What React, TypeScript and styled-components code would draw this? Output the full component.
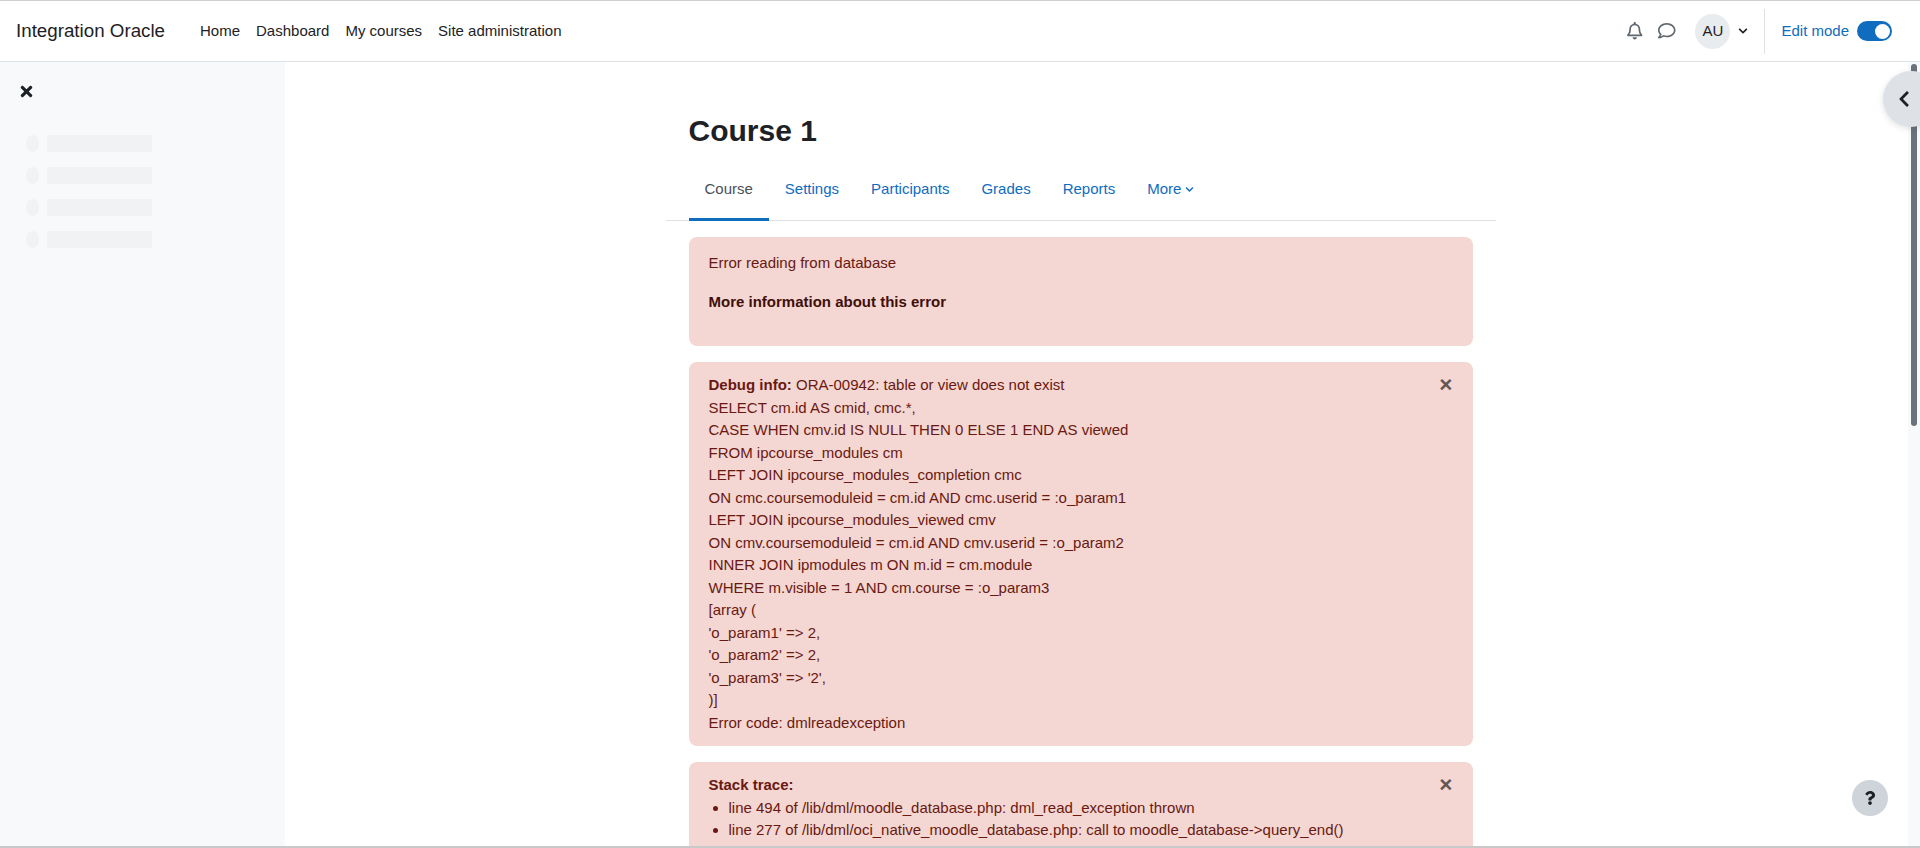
import React from "react";
import styled, { createGlobalStyle } from "styled-components";
import {
  FaRegBell,
  FaRegComment,
  FaChevronDown,
  FaChevronLeft,
  FaTimes,
  FaQuestion,
} from "react-icons/fa";

const GlobalStyle = createGlobalStyle`
  html, body {
    margin: 0;
    padding: 0;
    height: 100%;
    overflow: hidden;
    background: #fff;
    font-family: "Liberation Sans", Arial, sans-serif;
    font-size: 15px;
    line-height: 22.5px;
    color: #1d2125;
  }
  * {
    box-sizing: border-box;
  }
`;

const Shell = styled.div`
  position: relative;
  display: flex;
  flex-direction: column;
  height: 848px;
  border-top: 1px solid #cfcfcf;
  border-bottom: 2px solid #c9c9c9;
  overflow: hidden;
`;

const Navbar = styled.header`
  display: flex;
  align-items: center;
  flex: 0 0 61px;
  height: 61px;
  padding: 0 28px 0 16px;
  background: #fff;
  border-bottom: 1px solid #dee2e6;
`;

const Brand = styled.div`
  width: 176px;
  font-size: 18.75px;
  color: #1d2125;
`;

const PrimaryNav = styled.nav`
  display: flex;
  flex: 1;
`;

const NavLink = styled.a`
  padding: 0 8px;
  color: #1d2125;
`;

const NavTools = styled.div`
  display: flex;
  align-items: center;
  height: 45px;
`;

const ToolIcon = styled.span`
  display: flex;
  width: 32px;
  justify-content: center;
  color: #5f676e;
  font-size: 17.5px;
`;

const Avatar = styled.div`
  display: flex;
  align-items: center;
  justify-content: center;
  width: 35px;
  height: 35px;
  margin-left: 12.5px;
  border-radius: 50%;
  background: #e9ecef;
  font-size: 15px;
  color: #1d2125;
`;

const Caret = styled.span`
  display: flex;
  margin: 0 16px 0 8px;
  font-size: 10px;
  color: #1d2125;
`;

const EditMode = styled.div`
  display: flex;
  align-items: center;
  gap: 8px;
  height: 45px;
  padding-left: 16px;
  border-left: 1px solid #dee2e6;
  color: #0f6cbf;
`;

const Toggle = styled.span`
  display: flex;
  justify-content: flex-end;
  align-items: center;
  width: 35px;
  height: 20px;
  padding: 2px;
  border-radius: 10px;
  background: #0f6cbf;

  &::after {
    content: "";
    width: 15px;
    height: 15px;
    border-radius: 50%;
    background: #fff;
  }
`;

const Body = styled.div`
  display: flex;
  flex: 1;
  min-height: 0;
`;

const Drawer = styled.aside`
  flex: 0 0 285px;
  padding: 19px 26px 0;
  background: #f8f9fa;
`;

const DrawerClose = styled.div`
  display: flex;
  height: 20px;
  margin-left: -8px;
  align-items: center;
  font-size: 17px;
  color: #1d2125;
`;

const SkeletonList = styled.div`
  display: flex;
  flex-direction: column;
  gap: 15px;
  margin-top: 34px;
`;

const SkeletonRow = styled.div`
  display: flex;
  align-items: center;
  gap: 8px;
`;

const SkeletonDot = styled.span`
  width: 13px;
  height: 17px;
  border-radius: 50%;
  background: #f1f2f4;
`;

const SkeletonBar = styled.span`
  width: 105px;
  height: 17px;
  background: #f1f2f4;
`;

const Main = styled.main`
  flex: 1;
  overflow: hidden;
  padding-right: 32px;
`;

const ScrollTrack = styled.div`
  flex: 0 0 12px;
  padding: 2px 3px;
  background: #f8f9fa;
`;

const ScrollThumb = styled.div`
  height: 362px;
  border-radius: 3px;
  background: #6a737b;
`;

const Column = styled.div`
  width: 830px;
  margin: 0 auto;
`;

const Heading = styled.h1`
  margin: 0;
  padding: 51px 23px 0;
  font-size: 30px;
  line-height: 36px;
  font-weight: 700;
  color: #1d2125;
`;

const Tabs = styled.nav`
  display: flex;
  margin-top: 12px;
  padding: 0 23px;
  border-bottom: 1px solid #dee2e6;
`;

const Tab = styled.a<{ $active?: boolean }>`
  display: flex;
  align-items: center;
  gap: 4px;
  height: 60px;
  padding: 0 16px;
  margin-bottom: -1px;
  color: ${(p) => (p.$active ? "#495057" : "#0f6cbf")};
  border-bottom: 3px solid ${(p) => (p.$active ? "#0f6cbf" : "transparent")};
`;

const TabCaret = styled.span`
  display: flex;
  font-size: 9px;
`;

const Alerts = styled.div`
  display: flex;
  flex-direction: column;
  gap: 16px;
  padding: 16px 23px 0;
`;

const Alert = styled.div`
  display: flex;
  justify-content: space-between;
  padding: 12px 20px;
  background: #f4d6d2;
  border-radius: 8px;
  color: #691911;
`;

const AlertText = styled.div`
  flex: 1;
`;

const Paragraph = styled.p`
  margin: 3px 0 16px;
`;

const MoreInfo = styled.p`
  margin: 0 0 21px;
  font-weight: 700;
  color: #3f0f0a;
`;

const DebugLine = styled.div``;

const Strong = styled.strong`
  font-weight: 700;
`;

const CloseButton = styled.span`
  flex: 0 0 auto;
  font-size: 22.5px;
  line-height: 22px;
  font-weight: 700;
  color: #000;
  opacity: 0.6;
`;

const TraceList = styled.ul`
  margin: 0;
  padding-left: 20px;
`;

const DrawerHandle = styled.div`
  position: absolute;
  top: 70px;
  left: 1883px;
  display: flex;
  align-items: center;
  width: 56px;
  height: 56px;
  padding-left: 12px;
  border-radius: 50%;
  background: #dee2e6;
  box-shadow: 0 2px 6px rgba(0, 0, 0, 0.12);
  font-size: 18px;
  color: #1d2125;
`;

const HelpButton = styled.div`
  position: absolute;
  top: 779px;
  left: 1852px;
  display: flex;
  align-items: center;
  justify-content: center;
  width: 36px;
  height: 36px;
  border-radius: 50%;
  background: #ced4da;
  font-size: 14px;
  color: #1d2125;
`;

const debugLines = [
  "SELECT cm.id AS cmid, cmc.*,",
  "CASE WHEN cmv.id IS NULL THEN 0 ELSE 1 END AS viewed",
  "FROM ipcourse_modules cm",
  "LEFT JOIN ipcourse_modules_completion cmc",
  "ON cmc.coursemoduleid = cm.id AND cmc.userid = :o_param1",
  "LEFT JOIN ipcourse_modules_viewed cmv",
  "ON cmv.coursemoduleid = cm.id AND cmv.userid = :o_param2",
  "INNER JOIN ipmodules m ON m.id = cm.module",
  "WHERE m.visible = 1 AND cm.course = :o_param3",
  "[array (",
  "'o_param1' => 2,",
  "'o_param2' => 2,",
  "'o_param3' => '2',",
  ")]",
  "Error code: dmlreadexception",
];

const traceLines = [
  "line 494 of /lib/dml/moodle_database.php: dml_read_exception thrown",
  "line 277 of /lib/dml/oci_native_moodle_database.php: call to moodle_database->query_end()",
  "line 1654 of /lib/dml/oci_native_moodle_database.php: call to oci_native_moodle_database->query_end()",
];

const primaryLinks = ["Home", "Dashboard", "My courses", "Site administration"];
const courseTabs = ["Settings", "Participants", "Grades", "Reports"];

const App: React.FC = () => {
  return (
    <Shell>
      <GlobalStyle />
      <Navbar>
        <Brand>Integration Oracle</Brand>
        <PrimaryNav>
          {primaryLinks.map((item) => (
            <NavLink key={item}>{item}</NavLink>
          ))}
        </PrimaryNav>
        <NavTools>
          <ToolIcon>
            <FaRegBell />
          </ToolIcon>
          <ToolIcon>
            <FaRegComment />
          </ToolIcon>
          <Avatar>AU</Avatar>
          <Caret>
            <FaChevronDown />
          </Caret>
        </NavTools>
        <EditMode>
          Edit mode
          <Toggle />
        </EditMode>
      </Navbar>
      <Body>
        <Drawer>
          <DrawerClose>
            <FaTimes />
          </DrawerClose>
          <SkeletonList>
            {[0, 1, 2, 3].map((row) => (
              <SkeletonRow key={row}>
                <SkeletonDot />
                <SkeletonBar />
              </SkeletonRow>
            ))}
          </SkeletonList>
        </Drawer>
        <Main>
          <Column>
            <Heading>Course 1</Heading>
            <Tabs>
              <Tab $active>Course</Tab>
              {courseTabs.map((item) => (
                <Tab key={item}>{item}</Tab>
              ))}
              <Tab>
                More
                <TabCaret>
                  <FaChevronDown />
                </TabCaret>
              </Tab>
            </Tabs>
            <Alerts>
              <Alert>
                <AlertText>
                  <Paragraph>Error reading from database</Paragraph>
                  <MoreInfo>More information about this error</MoreInfo>
                </AlertText>
              </Alert>
              <Alert>
                <AlertText>
                  <DebugLine>
                    <Strong>Debug info:</Strong> ORA-00942: table or view does
                    not exist
                  </DebugLine>
                  {debugLines.map((line) => (
                    <DebugLine key={line}>{line}</DebugLine>
                  ))}
                </AlertText>
                <CloseButton>×</CloseButton>
              </Alert>
              <Alert>
                <AlertText>
                  <Strong>Stack trace:</Strong>
                  <TraceList>
                    {traceLines.map((line) => (
                      <li key={line}>{line}</li>
                    ))}
                  </TraceList>
                </AlertText>
                <CloseButton>×</CloseButton>
              </Alert>
            </Alerts>
          </Column>
        </Main>
        <ScrollTrack>
          <ScrollThumb />
        </ScrollTrack>
      </Body>
      <DrawerHandle>
        <FaChevronLeft />
      </DrawerHandle>
      <HelpButton>
        <FaQuestion />
      </HelpButton>
    </Shell>
  );
};

export default App;
